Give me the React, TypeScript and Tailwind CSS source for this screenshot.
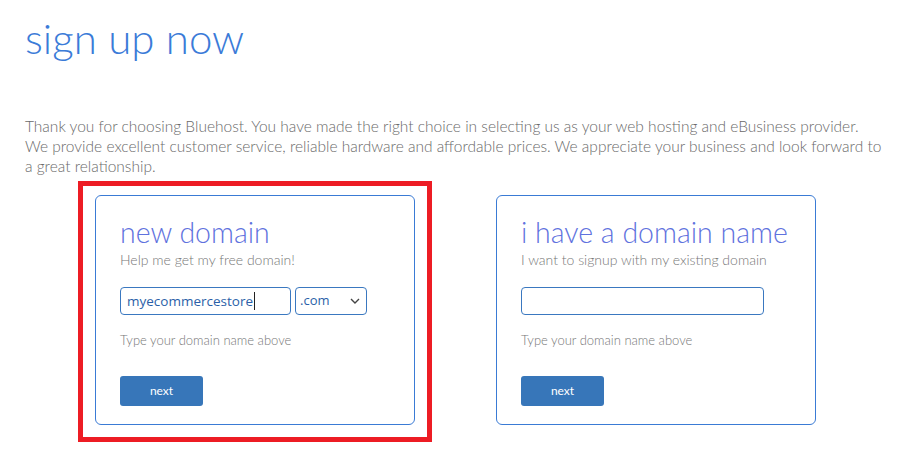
export default function App() {
  const font = { fontFamily: 'Lato, "Open Sans", sans-serif' };

  return (
    <div className="min-h-[453px] bg-white font-light text-[#777]" style={font}>
      <div className="px-[25px] pt-[10px]">
        <h1 className="text-[42px] leading-[56px] font-light text-[#3b7bd8]">sign up now</h1>
        <p className="mt-[50px] text-[15.5px] leading-[20px] text-[#6a6a6a] max-w-[857px]">
          Thank you for choosing Bluehost. You have made the right choice in selecting us as your web hosting and
          eBusiness provider.<br />We provide excellent customer service, reliable hardware and affordable prices. We
          appreciate your business and look forward to<br />a great relationship.
        </p>
      </div>

      {/* Options */}
      <div className="flex gap-[81px] pl-[95px] pt-[19px]">
        <div className="relative">
          <DomainCard
            title="new domain"
            subtitle="Help me get my free domain!"
            withSelect
            value="myecommercestore"
          />
          {/* highlight */}
          <div className="pointer-events-none absolute -left-[17px] -top-[14px] -right-[17px] -bottom-[17px] border-[5px] border-[#ed1c24]" />
        </div>
        <DomainCard title="i have a domain name" subtitle="I want to signup with my existing domain" />
      </div>
    </div>
  );
}

function DomainCard({
  title,
  subtitle,
  withSelect,
  value,
}: {
  title: string;
  subtitle: string;
  withSelect?: boolean;
  value?: string;
}) {
  const inputFont = { fontFamily: '"Open Sans", Arial, sans-serif' };

  return (
    <div className="w-[320px] h-[230px] rounded-[6px] border border-[#3a7bd5] pl-[24px] pt-[17px]">
      <h2 className="text-[28.5px] leading-[38px] font-light text-[#5f72de]">{title}</h2>
      <div className="text-[14px] leading-[18px] text-[#777]">{subtitle}</div>

      <div className="mt-[18px] flex gap-[4px]">
        {withSelect ? (
          <>
            <div
              className="flex h-[28px] w-[171px] items-center rounded-[4px] border border-[#3a78c0] px-[6px] text-[13.5px] font-normal text-[#2b5fa8]"
              style={inputFont}
            >
              {value}
              <span className="ml-px h-[18px] w-px bg-[#222]" />
            </div>
            <div
              className="flex h-[28px] w-[72px] items-center justify-between rounded-[4px] border border-[#3a78c0] pl-[4px] pr-[6px] text-[13px] font-normal text-[#2b5fa8]"
              style={inputFont}
            >
              .com
              <svg width="10" height="6" viewBox="0 0 10 6" fill="none">
                <path d="M1 1l4 4 4-4" stroke="#444" strokeWidth="1.4" />
              </svg>
            </div>
          </>
        ) : (
          <div className="h-[28px] w-[243px] rounded-[4px] border border-[#3a78c0]" />
        )}
      </div>

      <div className="mt-[17px] text-[13px] leading-[16px] text-[#777]">Type your domain name above</div>

      <button className="mt-[28px] h-[30px] w-[83px] rounded-[3px] bg-[#3776b9] text-[12px] font-normal text-white">
        next
      </button>
    </div>
  );
}
